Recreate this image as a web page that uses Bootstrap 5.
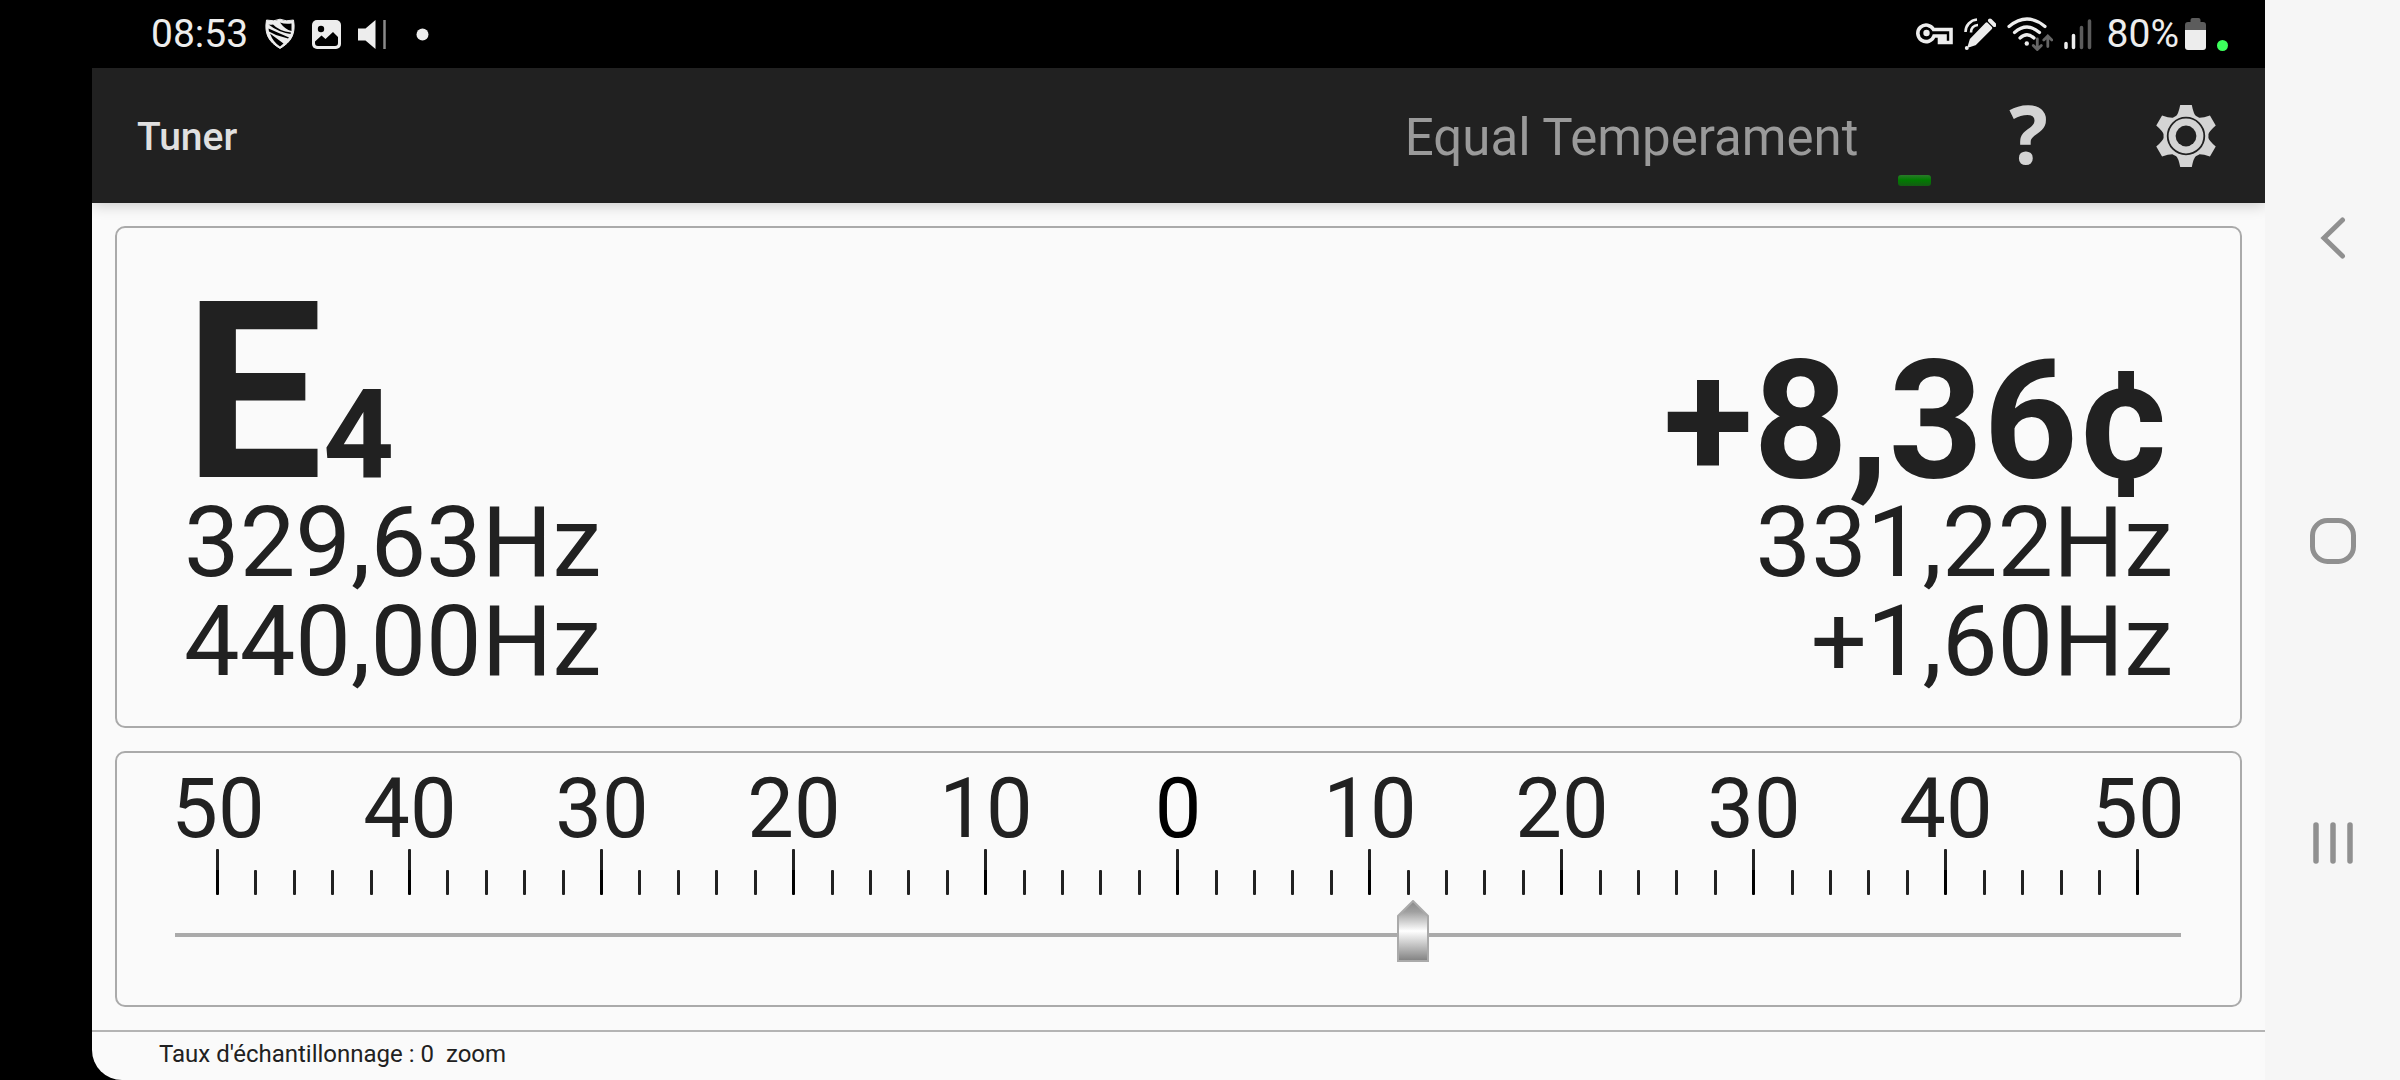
<!DOCTYPE html>
<html lang="fr">
<head>
<meta charset="utf-8">
<meta name="viewport" content="width=device-width, initial-scale=1">
<title>Tuner</title>
<link href="https://cdn.jsdelivr.net/npm/bootstrap@5.3.0/dist/css/bootstrap.min.css" rel="stylesheet">
<script src="https://cdn.jsdelivr.net/npm/bootstrap@5.3.0/dist/js/bootstrap.bundle.min.js"></script>
<style>
  body { font-family: Roboto, "Noto Sans", sans-serif; background: #000; color: #212121; line-height: 1; }
  svg { display: block; flex: none; }
  .main-col { padding-left: 92px; min-width: 0; }
  .status-bar { height: 68px; color: #ededed; font-size: 39px; padding: 0 37px 0 59px; }
  .status-left { gap: 17px; }
  .status-right { gap: 11px; }
  .battery { gap: 6px; margin-left: 4px; }
  .app-bar { height: 135px; background: #212121; padding: 0 49px 0 45px; position: relative; z-index: 1; box-shadow: 0 2px 14px rgba(0,0,0,.2); }
  .app-title { font-size: 39px; font-weight: 500; color: #e0e0e0; padding-top: 4px; }
  .temperament { font-size: 51px; color: #9a9a9a; padding-top: 4px; }
  .led { width: 33px; height: 11px; border-radius: 3px; background: linear-gradient(#2a7a2a, #007c00 45%, #145c14); margin: 89px 78px 0 40px; }
  .tool { padding: 0; border: 0; background: none; color: #d4d4d4; }
  .help-tool { font: 700 81px/80px "Open Sans", "Noto Sans", sans-serif; margin-right: 108px; padding-bottom: 6px; }
  .page-area { background: #fafafa; border-bottom-left-radius: 30px; overflow: hidden; }
  .panels { padding: 23px; gap: 23px; }
  .panel { border: 2px solid #aaa; border-radius: 10px; }
  .display { padding: 0 67px 35px; min-height: 502px; }
  .note { font-size: 247px; font-weight: 700; line-height: 200px; }
  .octave { font-size: 124px; line-height: 100px; }
  .cents { font-size: 165px; font-weight: 700; line-height: 120px; }
  .freq { font-size: 99px; line-height: 99px; }
  .meter { padding: 19px 6px 0 5px; min-height: 256px; }
  .scale-num { font-size: 83px; line-height: 74px; }
  .ticks { padding: 3px 94px 0; }
  .tick { width: 3px; height: 25px; border-radius: 1px; background: #212121; }
  .tick.major { height: 46px; background: linear-gradient(#212121 46%, #000 46%); }
  .needle { -webkit-appearance: none; appearance: none; display: block; width: calc(100% - 106px); margin: 5px 53px 0; height: 62px; background: linear-gradient(#aaa, #aaa) 0 33px / 100% 4px no-repeat; }
  .needle::-webkit-slider-thumb { -webkit-appearance: none; width: 32px; height: 62px; border: 0; border-radius: 0;
    background: url("data:image/svg+xml,%3Csvg xmlns='http://www.w3.org/2000/svg' viewBox='0 0 32 62'%3E%3Cdefs%3E%3ClinearGradient id='g' x2='0' y2='1'%3E%3Cstop stop-color='%23888'/%3E%3Cstop offset='.18' stop-color='%23a0a0a0'/%3E%3Cstop offset='.5' stop-color='%23fff'/%3E%3Cstop offset='1' stop-color='%23808080'/%3E%3C/linearGradient%3E%3C/defs%3E%3Cpath d='M16 1 31 16V61H1V16Z' fill='url(%23g)' stroke='%23aaa' stroke-width='2'/%3E%3C/svg%3E"); }
  .sample-bar { border-top: 2px solid #b4b4b4; font-size: 24px; padding: 0 67px 4px; height: 50px; white-space: pre; }
  .nav-rail { width: 135px; flex: none; position: relative; z-index: 2; background: #f6f6f6; padding: 217px 0 216px; }
  .nav-rail button { border: 0; padding: 0; background: none; }
</style>
</head>
<body>
<div class="d-flex min-vh-100">
  <div class="main-col flex-grow-1 d-flex flex-column">
    <div class="status-bar d-flex align-items-center justify-content-between">
      <div class="status-left d-flex align-items-center">
        <span>08:53</span>
        <svg width="30" height="32" viewBox="0 0 30 32">
          <path d="M1.500 2Q9 4 15 1.200 21 4 28.500 2C31 16 26 24 15 30.500 4 24-1 16 1.500 2Z" fill="#ededed" stroke="#ededed" stroke-linejoin="round"/>
          <path d="M15 4.500Q20 6.500 26.500 5.500V13Q20 11.500 15 4.500ZM3.500 6.500Q6 7 8 6.500 14 13 26 14.500L25.500 16Q13 14 3.500 6.500ZM3.500 10.500 24 19.500 23 20.500 11 17 4 13.500ZM5 15.500 18.500 25.500 15 28.500Q8 24 5 15.500Z" fill="#000"/>
        </svg>
        <svg width="29" height="29" viewBox="0 0 29 29">
          <rect width="29" height="29" rx="5" fill="#ededed"/>
          <circle cx="9" cy="9" r="3.200" fill="#000"/>
          <path d="M3 21.500 9.500 15.500 13.500 19 21 12 26 17V23Q26 26 23 26H6Q3 26 3 23Z" fill="#000"/>
        </svg>
        <svg width="72" height="29" viewBox="0 0 72 29">
          <path d="M0 8.500H7.500L17.500 0V29L7.500 20.500H0Z" fill="#ededed"/>
          <path d="M26.500 0V29" stroke="#8a8a8a" stroke-width="2.500"/>
          <circle cx="64.500" cy="14.500" r="6" fill="#ededed"/>
        </svg>
      </div>
      <div class="status-right d-flex align-items-center">
        <svg width="37" height="24" viewBox="0 0 37 24" fill="none" stroke="#ededed">
          <path d="M17.500 7.500H35V20.500H29V14H25.500V20.500H23.500V14H18A8.300 8.300 0 1 1 17.500 7.500Z" stroke-width="3.600"/>
          <circle cx="10.500" cy="11" r="3.200" fill="#ededed" stroke="none"/>
        </svg>
        <svg width="32" height="34" viewBox="0 0 32 34">
          <path d="M22.500 6.500 27 11 11 27 5 29 7 22.500Z" fill="#ededed" stroke="#ededed" stroke-width="2.500" stroke-linejoin="round"/>
          <path d="M26 3.500 30.500 8" stroke="#ededed" stroke-width="4" stroke-linecap="round"/>
          <circle cx="2.800" cy="31" r="2" fill="#ededed"/>
          <path d="M1.500 15A12.500 12.500 0 0 1 13 2.500M7 15.500A7 7 0 0 1 14 8" fill="none" stroke="#ededed" stroke-width="2.600"/>
        </svg>
        <svg width="46" height="34" viewBox="0 0 46 34" fill="none" stroke-linecap="round">
          <path d="M2 9.500Q20 -5.500 38 9.500M7.500 15.500Q20 4.500 32.500 15.500M13 21Q20 14.500 27 21" stroke="#ededed" stroke-width="3.200"/>
          <circle cx="19.800" cy="26.500" r="2.200" fill="#ededed"/>
          <path d="M30.300 22V32M26.300 28.500 30.300 32.500 34.300 28.500M40.800 29.500V19.500M36.800 23 40.800 19 44.800 23" stroke="#666" stroke-width="2.800"/>
        </svg>
        <svg width="28" height="32" viewBox="0 0 28 32" fill="none" stroke-width="3.500" stroke-linecap="round">
          <path d="M2 25.500V29.500M9.500 17.500V29.500" stroke="#ededed"/><path d="M17.500 9.500V29.500M25.500 3V29.500" stroke="#5c5c5c"/>
        </svg>
        <div class="battery d-flex align-items-center">
          <span>80%</span>
          <svg width="43" height="33" viewBox="0 0 43 33">
            <path d="M0 12V7Q0 4 3 4H5.500V2Q5.500 0 7.500 0H13.500Q15.500 0 15.500 2V4H18Q21 4 21 7V12Z" fill="#5c5c5c"/>
            <path d="M0 12H21V29Q21 32 18 32H3Q0 32 0 29Z" fill="#ededed"/>
            <circle cx="37.500" cy="27.500" r="5.500" fill="#3dff5c"/>
          </svg>
        </div>
      </div>
    </div>
    <header class="app-bar d-flex align-items-center">
      <span class="app-title me-auto">Tuner</span>
      <span class="temperament">Equal Temperament</span>
      <span class="led"></span>
      <button class="tool help-tool" aria-label="Help">?</button>
      <button class="tool" aria-label="Settings">
        <svg width="60" height="62" viewBox="-30 -31 60 62">
          <defs><path id="tooth" d="M-10.500 -19Q-7.500 -22-5.800 -31H5.800Q7.500 -22 10.500 -19Z"/></defs>
          <g fill="#d4d4d4">
            <circle r="22.500"/>
            <use href="#tooth"/><use href="#tooth" transform="rotate(60)"/><use href="#tooth" transform="rotate(120)"/>
            <use href="#tooth" transform="rotate(180)"/><use href="#tooth" transform="rotate(240)"/><use href="#tooth" transform="rotate(300)"/>
          </g>
          <circle r="18.300" fill="none" stroke="#212121" stroke-width="1.800"/>
          <circle r="10.400" fill="#212121"/>
        </svg>
      </button>
    </header>
    <main class="page-area flex-grow-1 d-flex flex-column">
      <div class="panels d-flex flex-column flex-grow-1">
        <section class="panel display d-flex flex-column justify-content-end">
          <div class="d-flex justify-content-between align-items-baseline">
            <div class="d-flex align-items-baseline"><span class="note">E</span><span class="note octave">4</span></div>
            <div class="cents">+8,36¢</div>
          </div>
          <div class="freq d-flex justify-content-between"><span>329,63Hz</span><span>331,22Hz</span></div>
          <div class="freq d-flex justify-content-between"><span>440,00Hz</span><span>+1,60Hz</span></div>
        </section>
        <section class="panel meter">
          <div class="row g-0 text-center scale-num">
            <span class="col">50</span><span class="col">40</span><span class="col">30</span><span class="col">20</span><span class="col">10</span><span class="col text-black">0</span><span class="col">10</span><span class="col">20</span><span class="col">30</span><span class="col">40</span><span class="col">50</span>
          </div>
          <div class="ticks d-flex justify-content-between align-items-end" id="ticks"></div>
          <input class="needle" type="range" min="-500" max="500" value="119" aria-label="Cents">
        </section>
      </div>
      <footer class="sample-bar d-flex align-items-center">Taux d'échantillonnage : 0  zoom</footer>
    </main>
  </div>
  <nav class="nav-rail d-flex flex-column align-items-center justify-content-between" aria-label="System">
    <button aria-label="Back"><svg width="26" height="42" viewBox="0 0 26 42" fill="none" stroke="#909090" stroke-width="5" stroke-linecap="round"><path d="M22.500 3 4 21 22.500 39"/></svg></button>
    <button aria-label="Home"><svg width="46" height="46" viewBox="0 0 46 46" fill="none" stroke="#909090" stroke-width="5"><rect x="2.500" y="2.500" width="41" height="41" rx="15"/></svg></button>
    <button aria-label="Recents"><svg width="40" height="42" viewBox="0 0 40 42" stroke="#909090" stroke-width="5.500" stroke-linecap="round"><path d="M3 3V39M20 3V39M37 3V39"/></svg></button>
  </nav>
</div>
<script>
  // 51 marks, one for every two cents; each fifth is a major one
  const ticks = document.getElementById('ticks');
  for (let i = 0; i <= 50; i++) {
    const mark = document.createElement('span');
    mark.className = i % 5 ? 'tick' : 'tick major';
    ticks.append(mark);
  }
</script>
</body>
</html>
